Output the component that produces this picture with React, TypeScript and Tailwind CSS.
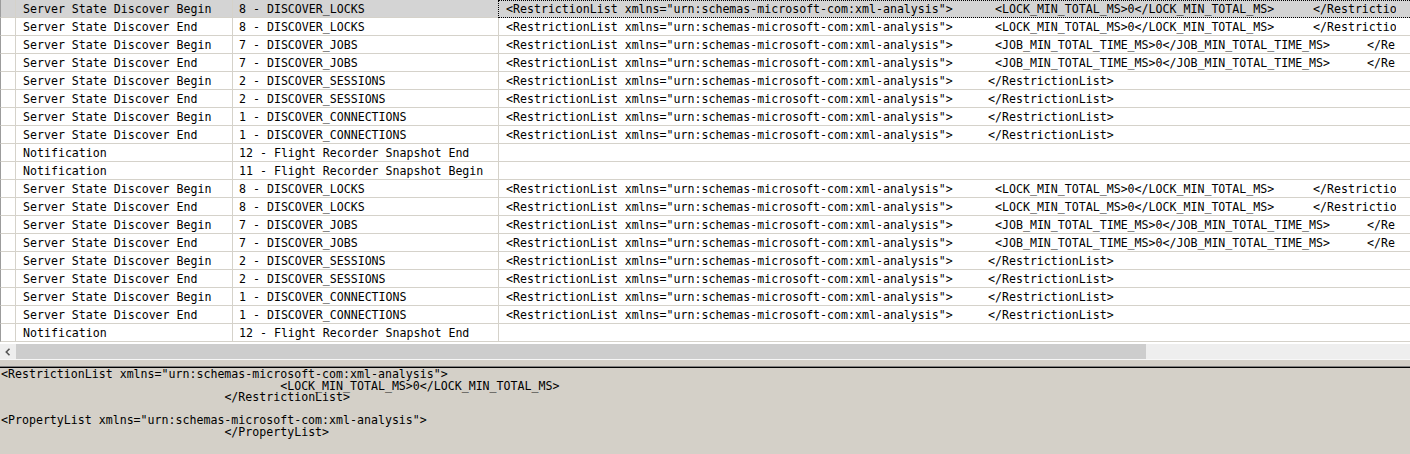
import React from "react";

type Kind = "lock" | "job" | "sess" | "none";

type Row = {
  event: string;
  sub: string;
  kind: Kind;
};

const OPEN = '<RestrictionList xmlns="urn:schemas-microsoft-com:xml-analysis">';

const block: Row[] = [
  { event: "Server State Discover Begin", sub: "8 - DISCOVER_LOCKS", kind: "lock" },
  { event: "Server State Discover End", sub: "8 - DISCOVER_LOCKS", kind: "lock" },
  { event: "Server State Discover Begin", sub: "7 - DISCOVER_JOBS", kind: "job" },
  { event: "Server State Discover End", sub: "7 - DISCOVER_JOBS", kind: "job" },
  { event: "Server State Discover Begin", sub: "2 - DISCOVER_SESSIONS", kind: "sess" },
  { event: "Server State Discover End", sub: "2 - DISCOVER_SESSIONS", kind: "sess" },
  { event: "Server State Discover Begin", sub: "1 - DISCOVER_CONNECTIONS", kind: "sess" },
  { event: "Server State Discover End", sub: "1 - DISCOVER_CONNECTIONS", kind: "sess" },
];

const rows: Row[] = [
  ...block,
  { event: "Notification", sub: "12 - Flight Recorder Snapshot End", kind: "none" },
  { event: "Notification", sub: "11 - Flight Recorder Snapshot Begin", kind: "none" },
  ...block,
  { event: "Notification", sub: "12 - Flight Recorder Snapshot End", kind: "none" },
];

function TextData({ kind }: { kind: Kind }) {
  if (kind === "none") return null;
  if (kind === "sess") {
    return (
      <div className="flex w-[890px] overflow-hidden whitespace-pre">
        <span className="w-[482px] shrink-0">{OPEN}</span>
        <span>{"</RestrictionList>"}</span>
      </div>
    );
  }
  if (kind === "lock") {
    return (
      <div className="flex w-[890px] overflow-hidden whitespace-pre">
        <span className="w-[489px] shrink-0">{OPEN}</span>
        <span className="w-[318px] shrink-0">{"<LOCK_MIN_TOTAL_MS>0</LOCK_MIN_TOTAL_MS>"}</span>
        <span>{"</RestrictionList>"}</span>
      </div>
    );
  }
  return (
    <div className="flex w-[890px] overflow-hidden whitespace-pre">
      <span className="w-[489px] shrink-0">{OPEN}</span>
      <span className="w-[372px] shrink-0">{"<JOB_MIN_TOTAL_TIME_MS>0</JOB_MIN_TOTAL_TIME_MS>"}</span>
      <span>{"</RestrictionList>"}</span>
    </div>
  );
}

function GridRow({ row, selected }: { row: Row; selected: boolean }) {
  return (
    <div className={`flex h-[18px] ${selected ? "bg-[#d4d4d4]" : "bg-white"}`}>
      <div className="w-[16px] shrink-0 border-l border-l-[#9c9c9c] border-r border-r-[#d5d2ca] border-b border-b-[#d5d2ca]" />
      <div className="w-[216px] shrink-0 pl-[7px] pt-[1px] border-b border-[#d5d2ca] whitespace-pre">
        {row.event}
      </div>
      <div className="w-[266px] shrink-0 pl-[6px] pt-[1px] border-l border-b border-[#d5d2ca] whitespace-pre">
        {row.sub}
      </div>
      <div
        className={
          selected
            ? "flex-1 min-w-0 pl-[7px] border border-r-0 border-dotted border-black"
            : "flex-1 min-w-0 pl-[7px] pt-[1px] border-l border-b border-[#d5d2ca]"
        }
      >
        <TextData kind={row.kind} />
      </div>
    </div>
  );
}

export default function App() {
  return (
    <div className="flex h-[454px] w-[1410px] flex-col overflow-hidden bg-white font-['DejaVu_Sans_Mono',monospace] text-[11.6px] leading-[17px] text-black">
      <div className="flex flex-col">
        {rows.map((row, i) => (
          <GridRow key={i} row={row} selected={i === 0} />
        ))}
      </div>

      {/* horizontal scrollbar */}
      <div className="mt-[2px] flex h-[15px] shrink-0 bg-[#eeeeee]">
        <div className="flex w-[16px] shrink-0 items-center justify-center">
          <svg width="6" height="8" viewBox="0 0 6 8">
            <polyline points="4.5,0.8 1.3,4 4.5,7.2" fill="none" stroke="#555" strokeWidth="1.6" />
          </svg>
        </div>
        <div className="w-[1130px] shrink-0 bg-[#cdcdcd]" />
      </div>

      <div className="h-[1px] shrink-0 bg-[#f7f7f7]" />
      <div className="h-[6px] shrink-0 bg-[#d4d0c8]" />
      <div className="h-[1px] shrink-0 bg-[#808080]" />
      <div className="h-[1px] shrink-0 bg-black" />

      {/* detail pane */}
      <div className="flex-1 bg-[#d4d0c8] pl-[1px] pt-[1px] leading-[11.5px] whitespace-pre [tab-size:8]">
        <div>{OPEN}</div>
        <div>{"\t\t\t\t\t<LOCK_MIN_TOTAL_MS>0</LOCK_MIN_TOTAL_MS>"}</div>
        <div>{"\t\t\t\t</RestrictionList>"}</div>
        <div className="h-[11.5px]" />
        <div>{'<PropertyList xmlns="urn:schemas-microsoft-com:xml-analysis">'}</div>
        <div>{"\t\t\t\t</PropertyList>"}</div>
      </div>
    </div>
  );
}
